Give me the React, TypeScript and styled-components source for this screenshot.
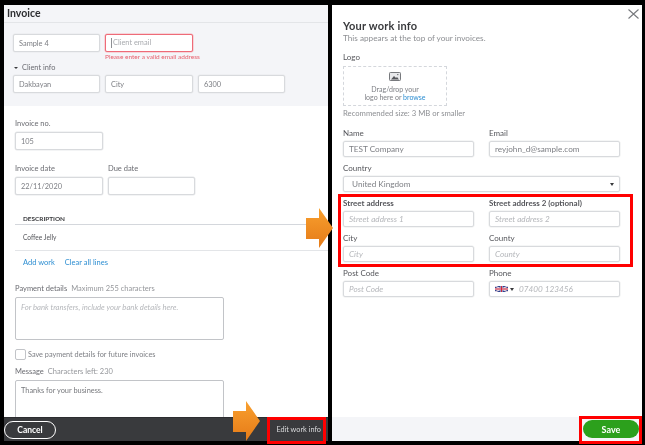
import { createGlobalStyle, styled } from "styled-components"

const Global = createGlobalStyle`
  html, body {
    margin: 0;
    padding: 0;
    background: #000;
  }
  * {
    box-sizing: border-box;
  }
`

const Page = styled.div`
  position: relative;
  width: 645px;
  height: 445px;
  padding: 5px 3px 4px 4px;
  display: grid;
  grid-template-columns: 324px 310px;
  column-gap: 4px;
  overflow: hidden;
  font-family: Lato, "Open Sans", sans-serif;
  color: #6b6c72;
`

const Panel = styled.section`
  display: flex;
  flex-direction: column;
  min-height: 0;
  overflow: hidden;
  background: #fff;
  filter: blur(0.3px);
`

const LeftTop = styled.div`
  height: 101px;
  flex: none;
  background: #f4f5f8;
`

const InvoiceHeader = styled.header`
  height: 18px;
  padding: 1px 3px 0;
  font-size: 10.5px;
  line-height: 15px;
  font-weight: 700;
  color: #2d2e31;
  border-bottom: 1px solid #e3e5e8;
`

const TopRow = styled.div<{ $top: number }>`
  display: flex;
  gap: 5px;
  padding-left: 9px;
  margin-top: ${(p) => p.$top}px;
`

const Field = styled.div<{ $w: number; $error?: boolean }>`
  width: ${(p) => p.$w}px;
  height: 18px;
  flex: none;
  display: flex;
  align-items: center;
  padding: 0 5px;
  font-size: 7.4px;
  color: #7d7f84;
  background: #fff;
  border: 1px solid ${(p) => (p.$error ? "#ee6b78" : "#d8dadd")};
  border-radius: 2px;
  box-shadow: 0 0 0 0.5px ${(p) => (p.$error ? "#f5b5bb" : "#e8e9eb")};
`

const Hint = styled.span`
  font-style: italic;
  color: #b5b7bb;
`

const ClientEmail = styled.span`
  padding-left: 1px;
  line-height: 10px;
  color: #a9abaf;
  border-left: 1px solid #8d8f93;
`

const ErrorText = styled.div`
  margin: 1px 0 0 101px;
  font-size: 6.5px;
  line-height: 8px;
  color: #e8616e;
`

const ClientInfo = styled.div`
  margin: 2px 0 0 10px;
  display: flex;
  align-items: center;
  gap: 4px;
  font-size: 7.4px;
  line-height: 9px;
  color: #6b6c72;
`

const SmallCaret = styled.span`
  width: 0;
  height: 0;
  border-left: 2px solid transparent;
  border-right: 2px solid transparent;
  border-top: 2px solid #393a3d;
`

const Card = styled.div`
  flex: 1;
  min-height: 0;
  margin-left: 4px;
  padding: 13px 0 0 7px;
  overflow: hidden;
  background: #fff;
`

const Label = styled.div`
  font-size: 7.5px;
  line-height: 9px;
  color: #6b6c72;
`

const Muted = styled.span`
  margin-left: 4px;
  color: #95979b;
`

const Stack = styled.div<{ $top?: number }>`
  display: flex;
  flex-direction: column;
  gap: 4px;
  margin-top: ${(p) => p.$top ?? 0}px;
`

const DateRow = styled.div`
  display: flex;
  gap: 5px;
  margin-top: 14px;
`

const Description = styled.div`
  margin-top: 20px;
  height: 10px;
  padding-left: 8px;
  font-size: 6.4px;
  line-height: 8px;
  font-weight: 700;
  color: #393a3d;
  border-bottom: 1px solid #d4d7dc;
`

const Line = styled.div`
  height: 26px;
  padding: 0 0 2px 8px;
  display: flex;
  align-items: center;
  font-size: 6.6px;
  color: #55565b;
  border-bottom: 1px solid #e3e5e8;
`

const LinkRow = styled.div`
  display: flex;
  gap: 10px;
  margin-top: 7px;
  padding-left: 8px;
  font-size: 7.5px;
  line-height: 9px;
  color: #2f8fd2;
`

const Area = styled.div<{ $h: number }>`
  width: 209px;
  height: ${(p) => p.$h}px;
  flex: none;
  padding: 5px;
  font-size: 7.4px;
  line-height: 9px;
  color: #77797d;
  border: 1px solid #c2c4c8;
  border-radius: 2px;
`

const AreaHint = styled(Hint)`
  font-size: 7.7px;
`

const CheckRow = styled.div`
  display: flex;
  align-items: center;
  gap: 2px;
  margin-top: 9px;
  font-size: 7.3px;
  color: #7d7f84;
`

const Box = styled.span`
  width: 11px;
  height: 11px;
  background: #fff;
  border: 1px solid #c2c4c8;
  border-radius: 2px;
`

const DarkFooter = styled.footer`
  height: 24px;
  flex: none;
  display: flex;
  align-items: center;
  justify-content: space-between;
  background: #393a3d;
  border-top: 1px solid #2c2d30;
`

const CancelButton = styled.button`
  width: 52px;
  height: 18px;
  padding: 0;
  font: 700 8.5px Lato, sans-serif;
  color: #fff;
  background: transparent;
  border: 1px solid #fff;
  border-radius: 9px;
`

const EditLink = styled.span`
  margin-right: 7px;
  font-size: 7.3px;
  color: #d9dadc;
`

const InfoBody = styled.div`
  position: relative;
  flex: 1;
  padding: 15px 0 0 11px;
`

const Close = styled.svg`
  position: absolute;
  top: 4px;
  right: 3px;
  width: 11px;
  height: 10px;
`

const Title = styled.h2`
  margin: 0;
  font-size: 11px;
  line-height: 12px;
  font-weight: 700;
  letter-spacing: 0.2px;
  color: #393a3d;
`

const Sub = styled.p`
  margin: 2px 0 0;
  font-size: 8.2px;
  line-height: 9px;
  color: #8d8f93;
`

const Drop = styled.div`
  width: 104px;
  height: 40px;
  display: flex;
  flex-direction: column;
  align-items: center;
  justify-content: flex-end;
  padding-bottom: 4px;
  font-size: 7px;
  line-height: 8px;
  text-align: center;
  color: #7d7f84;
  border: 1px dashed #d4d7dc;
`

const Browse = styled.span`
  color: #2f8fd2;
`

const Note = styled.div`
  margin-top: 3px;
  font-size: 7.7px;
  line-height: 8px;
  color: #8d8f93;
`

const FormGrid = styled.div`
  display: grid;
  grid-template-columns: 131px 131px;
  column-gap: 15px;
  row-gap: 7px;
  margin-top: 12px;
`

const Cell = styled.div<{ $wide?: boolean }>`
  display: flex;
  flex-direction: column;
  gap: 3px;
  grid-column: ${(p) => (p.$wide ? "1 / span 2" : "auto")};
`

const FormLabel = styled.div<{ $strong?: boolean }>`
  font-size: 8px;
  line-height: 9px;
  font-weight: ${(p) => (p.$strong ? 700 : 400)};
  color: #55565b;
`

const FormInput = styled.div`
  height: 16px;
  display: flex;
  align-items: center;
  gap: 2px;
  padding: 0 5px;
  font-size: 8.2px;
  color: #7d7f84;
  border: 1px solid #d8dadd;
  border-radius: 2px;
  box-shadow: 0 0 0 0.5px #eceded;
`

const SelectValue = styled.span`
  flex: 1;
  padding-left: 3px;
`

const DarkCaret = styled.span`
  width: 0;
  height: 0;
  border-left: 2.5px solid transparent;
  border-right: 2.5px solid transparent;
  border-top: 3px solid #393a3d;
`

const PhoneHint = styled(Hint)`
  margin-left: 3px;
`

const LightFooter = styled.footer`
  height: 24px;
  flex: none;
  display: flex;
  align-items: center;
  justify-content: flex-end;
  padding-right: 3px;
  background: #f4f5f8;
`

const SaveButton = styled.button`
  width: 56px;
  height: 18px;
  padding: 0;
  font: 700 9px Lato, sans-serif;
  color: #fff;
  background: #2ca01c;
  border: none;
  border-radius: 9px;
`

const Callout = styled.div<{ $l: number; $t: number; $w: number; $h: number }>`
  position: absolute;
  left: ${(p) => p.$l}px;
  top: ${(p) => p.$t}px;
  width: ${(p) => p.$w}px;
  height: ${(p) => p.$h}px;
  border: 3px solid #f00;
  pointer-events: none;
`

const ArrowSvg = styled.svg<{ $l: number; $t: number }>`
  position: absolute;
  left: ${(p) => p.$l}px;
  top: ${(p) => p.$t}px;
  width: 28px;
  height: 40px;
`

const ImageGlyph = styled.svg`
  margin-bottom: 4px;
`

function Arrow({ l, t, id }: { l: number; t: number; id: string }) {
  return (
    <ArrowSvg $l={l} $t={t} viewBox="0 0 28 40">
      <defs>
        <linearGradient id={id} x1="0" y1="0" x2="0" y2="1">
          <stop offset="0" stopColor="#f9a02e" />
          <stop offset="1" stopColor="#e57a18" />
        </linearGradient>
      </defs>
      <path d="M0 10H13V0L27 20L13 40V31H0Z" fill={`url(#${id})`} />
    </ArrowSvg>
  )
}

function Flag() {
  return (
    <svg width="13" height="6" viewBox="0 0 13 6">
      <rect width="13" height="6" fill="#2b3f8f" />
      <path d="M0 0L13 6M13 0L0 6" stroke="#e8d8e0" strokeWidth="1.2" />
      <path d="M6.5 0V6M0 3H13" stroke="#e8d8e0" strokeWidth="2" />
      <path d="M6.5 0V6M0 3H13" stroke="#d2243c" strokeWidth="1" />
    </svg>
  )
}

function ImageIcon() {
  return (
    <ImageGlyph width="12" height="9" viewBox="0 0 12 9">
      <rect x="0.5" y="0.5" width="11" height="8" rx="0.8" fill="#e8e9eb" stroke="#77797d" strokeWidth="1" />
      <path d="M2 7.5L5 4L7 6L8 5L10 7.5Z" fill="#55565b" />
      <circle cx="8.8" cy="2.6" r="0.7" fill="#55565b" />
    </ImageGlyph>
  )
}

export default function App() {
  return (
    <Page>
      <Global />
      <Panel>
        <LeftTop>
          <InvoiceHeader>Invoice</InvoiceHeader>
          <TopRow $top={11}>
            <Field $w={87}>Sample 4</Field>
            <Field $w={88} $error>
              <ClientEmail>Client email</ClientEmail>
            </Field>
          </TopRow>
          <ErrorText>Please enter a valid email address</ErrorText>
          <ClientInfo>
            <SmallCaret />
            Client info
          </ClientInfo>
          <TopRow $top={3}>
            <Field $w={87}>Dakbayan</Field>
            <Field $w={88}>City</Field>
            <Field $w={87}>6300</Field>
          </TopRow>
        </LeftTop>
        <Card>
          <Stack>
            <Label>Invoice no.</Label>
            <Field $w={88}>105</Field>
          </Stack>
          <DateRow>
            <Stack>
              <Label>Invoice date</Label>
              <Field $w={88}>22/11/2020</Field>
            </Stack>
            <Stack>
              <Label>Due date</Label>
              <Field $w={87} />
            </Stack>
          </DateRow>
          <Description>DESCRIPTION</Description>
          <Line>Coffee Jelly</Line>
          <LinkRow>
            <span>Add work</span>
            <span>Clear all lines</span>
          </LinkRow>
          <Stack $top={17}>
            <Label>
              Payment details<Muted>Maximum 255 characters</Muted>
            </Label>
            <Area $h={43}>
              <AreaHint>For bank transfers, include your bank details here.</AreaHint>
            </Area>
          </Stack>
          <CheckRow>
            <Box />
            Save payment details for future invoices
          </CheckRow>
          <Stack $top={7}>
            <Label>
              Message<Muted>Characters left: 230</Muted>
            </Label>
            <Area $h={60}>Thanks for your business.</Area>
          </Stack>
        </Card>
        <DarkFooter>
          <CancelButton>Cancel</CancelButton>
          <EditLink>Edit work info</EditLink>
        </DarkFooter>
      </Panel>

      <Panel>
        <InfoBody>
          <Close viewBox="0 0 11 10">
            <path d="M0.5 0.5L10.5 9.5M10.5 0.5L0.5 9.5" stroke="#77797d" strokeWidth="1.1" fill="none" />
          </Close>
          <Title>Your work info</Title>
          <Sub>This appears at the top of your invoices.</Sub>
          <Stack $top={10}>
            <FormLabel>Logo</FormLabel>
            <Drop>
              <ImageIcon />
              <span>Drag/drop your</span>
              <span>
                logo here or <Browse>browse</Browse>
              </span>
            </Drop>
          </Stack>
          <Note>Recommended size: 3 MB or smaller</Note>
          <FormGrid>
            <Cell>
              <FormLabel>Name</FormLabel>
              <FormInput>TEST Company</FormInput>
            </Cell>
            <Cell>
              <FormLabel>Email</FormLabel>
              <FormInput>reyjohn_d@sample.com</FormInput>
            </Cell>
            <Cell $wide>
              <FormLabel>Country</FormLabel>
              <FormInput>
                <SelectValue>United Kingdom</SelectValue>
                <DarkCaret />
              </FormInput>
            </Cell>
            <Cell>
              <FormLabel $strong>Street address</FormLabel>
              <FormInput>
                <Hint>Street address 1</Hint>
              </FormInput>
            </Cell>
            <Cell>
              <FormLabel $strong>Street address 2 (optional)</FormLabel>
              <FormInput>
                <Hint>Street address 2</Hint>
              </FormInput>
            </Cell>
            <Cell>
              <FormLabel>City</FormLabel>
              <FormInput>
                <Hint>City</Hint>
              </FormInput>
            </Cell>
            <Cell>
              <FormLabel>County</FormLabel>
              <FormInput>
                <Hint>County</Hint>
              </FormInput>
            </Cell>
            <Cell>
              <FormLabel>Post Code</FormLabel>
              <FormInput>
                <Hint>Post Code</Hint>
              </FormInput>
            </Cell>
            <Cell>
              <FormLabel>Phone</FormLabel>
              <FormInput>
                <Flag />
                <DarkCaret />
                <PhoneHint>07400 123456</PhoneHint>
              </FormInput>
            </Cell>
          </FormGrid>
        </InfoBody>
        <LightFooter>
          <SaveButton>Save</SaveButton>
        </LightFooter>
      </Panel>

      <Callout $l={338} $t={194} $w={295} $h={73} />
      <Callout $l={267} $t={417} $w={59} $h={27} />
      <Callout $l={579} $t={416} $w={63} $h={28} />
      <Arrow id="arrowMid" l={306} t={208} />
      <Arrow id="arrowLow" l={233} t={401} />
    </Page>
  )
}
